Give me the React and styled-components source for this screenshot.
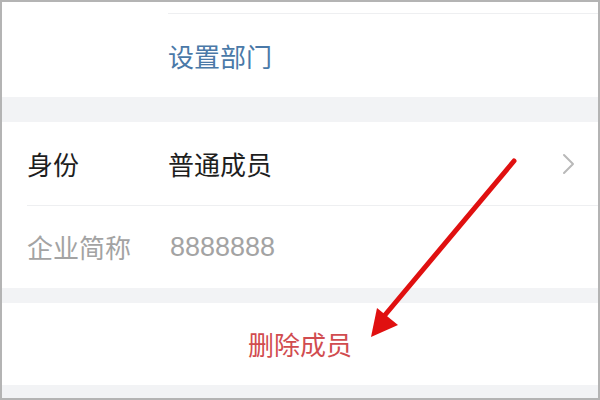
import React from "react";
import styled, { createGlobalStyle } from "styled-components";

const GlobalStyle = createGlobalStyle`
  html, body {
    margin: 0;
    padding: 0;
    background: #fff;
  }
  body {
    font-family: "Noto Sans CJK SC", "Noto Sans", sans-serif;
  }
`;

const Screen = styled.div`
  position: relative;
  width: 600px;
  height: 400px;
  box-sizing: border-box;
  border: 2px solid #b4b4b4;
  background: #f2f3f5;
  display: flex;
  flex-direction: column;
  overflow: hidden;
`;

const Group = styled.div`
  background: #fff;
  display: flex;
  flex-direction: column;
`;

const Band = styled.div`
  height: ${(p) => p.h}px;
  background: #f2f3f5;
`;

const Divider = styled.div`
  height: 1px;
  margin-left: ${(p) => p.inset}px;
  margin-top: ${(p) => p.top || 0}px;
  background: #eeeff1;
`;

const Row = styled.div`
  display: flex;
  align-items: center;
  height: ${(p) => p.h}px;
  padding: 0 22px 0 ${(p) => p.indent || 25}px;
  font-size: 26px;
  line-height: 1;
`;

const Label = styled.span`
  width: 141px;
  color: ${(p) => (p.muted ? "#a3a3a3" : "#1e1e1e")};
`;

const Value = styled.span`
  flex: 1;
  color: ${(p) => p.color || "#1e1e1e"};
`;

const Digits = styled(Value)`
  font-family: "Liberation Sans", "Noto Sans", sans-serif;
  font-size: 27px;
  padding-left: 2px;
`;

const Chevron = styled.svg`
  width: 14px;
  height: 22px;
`;

const DeleteRow = styled.div`
  height: 82px;
  background: #fff;
  display: flex;
  align-items: center;
  justify-content: center;
  color: #d14c4f;
  font-size: 26px;
  padding-bottom: 2px;
  box-sizing: border-box;
`;

const Arrow = styled.svg`
  position: absolute;
  left: 0;
  top: 0;
  width: 600px;
  height: 400px;
  pointer-events: none;
`;

export default function App() {
  return (
    <>
      <GlobalStyle />
      <Screen>
        <Group>
          <Divider inset={166} top={11} />
          <Row h={83} indent={166}>
            <Value color="#4a79a8">设置部门</Value>
          </Row>
        </Group>
        <Band h={25} />
        <Group>
          <Row h={83}>
            <Label>身份</Label>
            <Value>普通成员</Value>
            <Chevron viewBox="0 0 14 22">
              <polyline
                points="2,2 11,11 2,20"
                fill="none"
                stroke="#b9b9b9"
                strokeWidth="2"
                strokeLinecap="round"
                strokeLinejoin="round"
              />
            </Chevron>
          </Row>
          <Divider inset={25} />
          <Row h={82}>
            <Label muted>企业简称</Label>
            <Digits color="#a3a3a3">8888888</Digits>
          </Row>
        </Group>
        <Band h={15} />
        <DeleteRow>删除成员</DeleteRow>
        <Band h={13} />
        <Arrow viewBox="0 0 600 400">
          <line
            x1="512"
            y1="159"
            x2="383"
            y2="313"
            stroke="#e01010"
            strokeWidth="5"
            strokeLinecap="round"
          />
          <polygon points="369,335 375,306 396,323" fill="#e01010" />
        </Arrow>
      </Screen>
    </>
  );
}
